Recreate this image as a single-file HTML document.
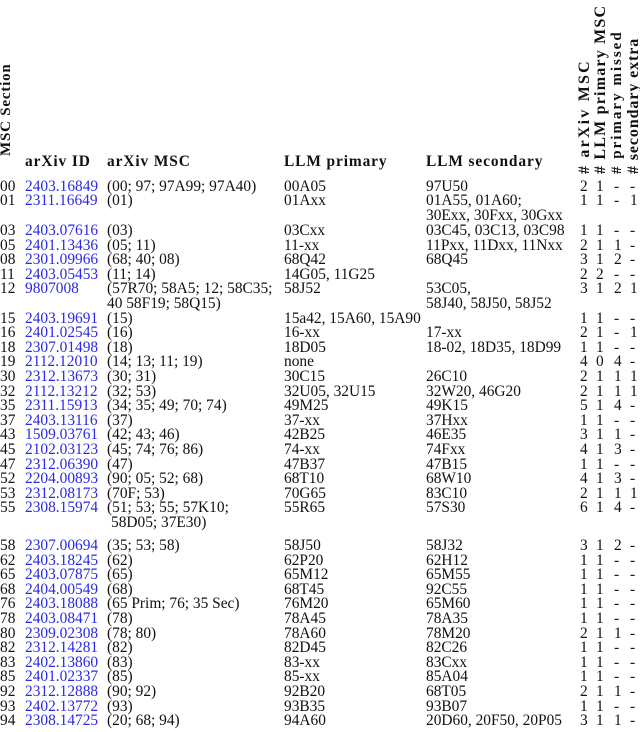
<!DOCTYPE html>
<html><head><meta charset="utf-8"><style>
html,body{margin:0;padding:0;background:#fff;}
body{width:640px;height:732px;position:relative;overflow:hidden;font-family:"Liberation Serif",serif;font-size:15.4px;color:#111;}
.r{position:absolute;left:0;height:15px;line-height:15px;white-space:nowrap;}
.r span{position:absolute;top:0;}
.a{left:0}.b{left:25px;color:#2a2ae6}.c{left:107px}.d{left:284px}.e{left:426px}
.f{left:580px}.g{left:596px}.h{left:614px}.i{left:630px}
.hd{position:absolute;font-weight:bold;white-space:nowrap;line-height:14px;font-size:15.4px;letter-spacing:0.9px;}
.rot{position:absolute;font-weight:bold;white-space:nowrap;line-height:15px;transform:rotate(-90deg);transform-origin:0 0;font-size:15px;letter-spacing:0.8px;}
</style></head><body>
<div class="rot" style="left:-1px;top:156px">MSC Section</div>
<div class="hd" style="left:25px;top:155px">arXiv ID</div>
<div class="hd" style="left:107px;top:155px">arXiv MSC</div>
<div class="hd" style="left:284px;top:155px">LLM primary</div>
<div class="hd" style="left:426px;top:155px">LLM secondary</div>
<div class="rot" style="left:577px;top:174px;font-size:16px;letter-spacing:2.2px">#&nbsp;arXiv MSC</div>
<div class="rot" style="left:593px;top:174px;font-size:16px;letter-spacing:1.2px">#&nbsp;LLM primary MSC</div>
<div class="rot" style="left:610px;top:174px;letter-spacing:2px">#&nbsp;primary missed</div>
<div class="rot" style="left:626px;top:174px;font-size:16px;letter-spacing:0.9px">#&nbsp;secondary extra</div>

<div class="r" style="top:179px"><span class="a">00</span><span class="b">2403.16849</span><span class="c">(00; 97; 97A99; 97A40)</span><span class="d">00A05</span><span class="e">97U50</span><span class="f">2</span><span class="g">1</span><span class="h">-</span><span class="i">-</span></div>
<div class="r" style="top:193px"><span class="a">01</span><span class="b">2311.16649</span><span class="c">(01)</span><span class="d">01Axx</span><span class="e">01A55, 01A60;</span><span class="f">1</span><span class="g">1</span><span class="h">-</span><span class="i">1</span></div>
<div class="r" style="top:208px"><span class="e">30Exx, 30Fxx, 30Gxx</span></div>
<div class="r" style="top:223px"><span class="a">03</span><span class="b">2403.07616</span><span class="c">(03)</span><span class="d">03Cxx</span><span class="e">03C45, 03C13, 03C98</span><span class="f">1</span><span class="g">1</span><span class="h">-</span><span class="i">-</span></div>
<div class="r" style="top:238px"><span class="a">05</span><span class="b">2401.13436</span><span class="c">(05; 11)</span><span class="d">11-xx</span><span class="e">11Pxx, 11Dxx, 11Nxx</span><span class="f">2</span><span class="g">1</span><span class="h">1</span><span class="i">-</span></div>
<div class="r" style="top:252px"><span class="a">08</span><span class="b">2301.09966</span><span class="c">(68; 40; 08)</span><span class="d">68Q42</span><span class="e">68Q45</span><span class="f">3</span><span class="g">1</span><span class="h">2</span><span class="i">-</span></div>
<div class="r" style="top:267px"><span class="a">11</span><span class="b">2403.05453</span><span class="c">(11; 14)</span><span class="d">14G05, 11G25</span><span class="f">2</span><span class="g">2</span><span class="h">-</span><span class="i">-</span></div>
<div class="r" style="top:281px"><span class="a">12</span><span class="b">9807008</span><span class="c">(57R70; 58A5; 12; 58C35;</span><span class="d">58J52</span><span class="e">53C05,</span><span class="f">3</span><span class="g">1</span><span class="h">2</span><span class="i">1</span></div>
<div class="r" style="top:296px"><span class="c">40 58F19; 58Q15)</span><span class="e">58J40, 58J50, 58J52</span></div>
<div class="r" style="top:311px"><span class="a">15</span><span class="b">2403.19691</span><span class="c">(15)</span><span class="d">15a42, 15A60, 15A90</span><span class="f">1</span><span class="g">1</span><span class="h">-</span><span class="i">-</span></div>
<div class="r" style="top:325px"><span class="a">16</span><span class="b">2401.02545</span><span class="c">(16)</span><span class="d">16-xx</span><span class="e">17-xx</span><span class="f">2</span><span class="g">1</span><span class="h">-</span><span class="i">1</span></div>
<div class="r" style="top:340px"><span class="a">18</span><span class="b">2307.01498</span><span class="c">(18)</span><span class="d">18D05</span><span class="e">18-02, 18D35, 18D99</span><span class="f">1</span><span class="g">1</span><span class="h">-</span><span class="i">-</span></div>
<div class="r" style="top:354px"><span class="a">19</span><span class="b">2112.12010</span><span class="c">(14; 13; 11; 19)</span><span class="d">none</span><span class="f">4</span><span class="g">0</span><span class="h">4</span><span class="i">-</span></div>
<div class="r" style="top:369px"><span class="a">30</span><span class="b">2312.13673</span><span class="c">(30; 31)</span><span class="d">30C15</span><span class="e">26C10</span><span class="f">2</span><span class="g">1</span><span class="h">1</span><span class="i">1</span></div>
<div class="r" style="top:384px"><span class="a">32</span><span class="b">2112.13212</span><span class="c">(32; 53)</span><span class="d">32U05, 32U15</span><span class="e">32W20, 46G20</span><span class="f">2</span><span class="g">1</span><span class="h">1</span><span class="i">1</span></div>
<div class="r" style="top:398px"><span class="a">35</span><span class="b">2311.15913</span><span class="c">(34; 35; 49; 70; 74)</span><span class="d">49M25</span><span class="e">49K15</span><span class="f">5</span><span class="g">1</span><span class="h">4</span><span class="i">-</span></div>
<div class="r" style="top:413px"><span class="a">37</span><span class="b">2403.13116</span><span class="c">(37)</span><span class="d">37-xx</span><span class="e">37Hxx</span><span class="f">1</span><span class="g">1</span><span class="h">-</span><span class="i">-</span></div>
<div class="r" style="top:427px"><span class="a">43</span><span class="b">1509.03761</span><span class="c">(42; 43; 46)</span><span class="d">42B25</span><span class="e">46E35</span><span class="f">3</span><span class="g">1</span><span class="h">1</span><span class="i">-</span></div>
<div class="r" style="top:442px"><span class="a">45</span><span class="b">2102.03123</span><span class="c">(45; 74; 76; 86)</span><span class="d">74-xx</span><span class="e">74Fxx</span><span class="f">4</span><span class="g">1</span><span class="h">3</span><span class="i">-</span></div>
<div class="r" style="top:457px"><span class="a">47</span><span class="b">2312.06390</span><span class="c">(47)</span><span class="d">47B37</span><span class="e">47B15</span><span class="f">1</span><span class="g">1</span><span class="h">-</span><span class="i">-</span></div>
<div class="r" style="top:471px"><span class="a">52</span><span class="b">2204.00893</span><span class="c">(90; 05; 52; 68)</span><span class="d">68T10</span><span class="e">68W10</span><span class="f">4</span><span class="g">1</span><span class="h">3</span><span class="i">-</span></div>
<div class="r" style="top:486px"><span class="a">53</span><span class="b">2312.08173</span><span class="c">(70F; 53)</span><span class="d">70G65</span><span class="e">83C10</span><span class="f">2</span><span class="g">1</span><span class="h">1</span><span class="i">1</span></div>
<div class="r" style="top:500px"><span class="a">55</span><span class="b">2308.15974</span><span class="c">(51; 53; 55; 57K10;</span><span class="d">55R65</span><span class="e">57S30</span><span class="f">6</span><span class="g">1</span><span class="h">4</span><span class="i">-</span></div>
<div class="r" style="top:515px"><span class="c" style="left:111px">58D05; 37E30)</span></div>
<div class="r" style="top:538px"><span class="a">58</span><span class="b">2307.00694</span><span class="c">(35; 53; 58)</span><span class="d">58J50</span><span class="e">58J32</span><span class="f">3</span><span class="g">1</span><span class="h">2</span><span class="i">-</span></div>
<div class="r" style="top:553px"><span class="a">62</span><span class="b">2403.18245</span><span class="c">(62)</span><span class="d">62P20</span><span class="e">62H12</span><span class="f">1</span><span class="g">1</span><span class="h">-</span><span class="i">-</span></div>
<div class="r" style="top:567px"><span class="a">65</span><span class="b">2403.07875</span><span class="c">(65)</span><span class="d">65M12</span><span class="e">65M55</span><span class="f">1</span><span class="g">1</span><span class="h">-</span><span class="i">-</span></div>
<div class="r" style="top:582px"><span class="a">68</span><span class="b">2404.00549</span><span class="c">(68)</span><span class="d">68T45</span><span class="e">92C55</span><span class="f">1</span><span class="g">1</span><span class="h">-</span><span class="i">-</span></div>
<div class="r" style="top:596px"><span class="a">76</span><span class="b">2403.18088</span><span class="c">(65 Prim; 76; 35 Sec)</span><span class="d">76M20</span><span class="e">65M60</span><span class="f">1</span><span class="g">1</span><span class="h">-</span><span class="i">-</span></div>
<div class="r" style="top:611px"><span class="a">78</span><span class="b">2403.08471</span><span class="c">(78)</span><span class="d">78A45</span><span class="e">78A35</span><span class="f">1</span><span class="g">1</span><span class="h">-</span><span class="i">-</span></div>
<div class="r" style="top:626px"><span class="a">80</span><span class="b">2309.02308</span><span class="c">(78; 80)</span><span class="d">78A60</span><span class="e">78M20</span><span class="f">2</span><span class="g">1</span><span class="h">1</span><span class="i">-</span></div>
<div class="r" style="top:640px"><span class="a">82</span><span class="b">2312.14281</span><span class="c">(82)</span><span class="d">82D45</span><span class="e">82C26</span><span class="f">1</span><span class="g">1</span><span class="h">-</span><span class="i">-</span></div>
<div class="r" style="top:655px"><span class="a">83</span><span class="b">2402.13860</span><span class="c">(83)</span><span class="d">83-xx</span><span class="e">83Cxx</span><span class="f">1</span><span class="g">1</span><span class="h">-</span><span class="i">-</span></div>
<div class="r" style="top:669px"><span class="a">85</span><span class="b">2401.02337</span><span class="c">(85)</span><span class="d">85-xx</span><span class="e">85A04</span><span class="f">1</span><span class="g">1</span><span class="h">-</span><span class="i">-</span></div>
<div class="r" style="top:684px"><span class="a">92</span><span class="b">2312.12888</span><span class="c">(90; 92)</span><span class="d">92B20</span><span class="e">68T05</span><span class="f">2</span><span class="g">1</span><span class="h">1</span><span class="i">-</span></div>
<div class="r" style="top:699px"><span class="a">93</span><span class="b">2402.13772</span><span class="c">(93)</span><span class="d">93B35</span><span class="e">93B07</span><span class="f">1</span><span class="g">1</span><span class="h">-</span><span class="i">-</span></div>
<div class="r" style="top:713px"><span class="a">94</span><span class="b">2308.14725</span><span class="c">(20; 68; 94)</span><span class="d">94A60</span><span class="e">20D60, 20F50, 20P05</span><span class="f">3</span><span class="g">1</span><span class="h">1</span><span class="i">-</span></div>
</body></html>
